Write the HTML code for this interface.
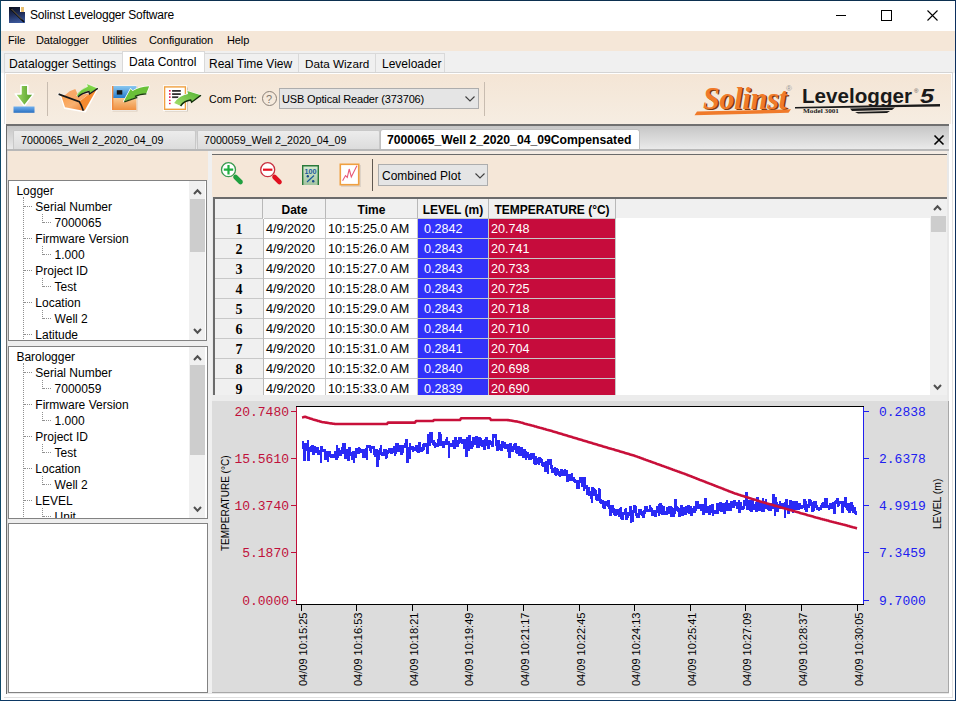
<!DOCTYPE html>
<html><head><meta charset="utf-8">
<style>
*{margin:0;padding:0;box-sizing:border-box}
html,body{width:956px;height:701px;overflow:hidden;background:#fff;font-family:"Liberation Sans",sans-serif}
.a{position:absolute}
.t{position:absolute;white-space:pre;line-height:14px;font-family:"Liberation Sans",sans-serif;font-size:12px;color:#000}
.mono{font-family:"Liberation Mono",monospace;font-size:13px;line-height:14px}
.rot{position:absolute;white-space:pre;font:11px/11px "Liberation Sans",sans-serif;color:#000;transform-origin:0 0;transform:rotate(-90deg) translate(-73px,0);width:73px;text-align:right}
.tick{position:absolute;width:1px;height:6px;background:#000}
.beige{background:#f5e7d8}
.tree .t{font-size:12px}
.dv{position:absolute;border-left:1px dotted #909090;width:0}
.dh{position:absolute;border-top:1px dotted #909090;height:0}
.sb{position:absolute;background:#f0f0f0}
.thumb{position:absolute;background:#cdcdcd}
.chev{position:absolute;width:7px;height:7px;border-left:1.6px solid #606060;border-top:1.6px solid #606060}
.cell{position:absolute;height:20px;border-right:1px solid #c8c8c8;border-bottom:1px solid #c8c8c8;font:12.6px/21px "Liberation Sans",sans-serif;padding-left:2px;white-space:pre;overflow:hidden}
.hdr{position:absolute;height:20px;background:#f0f0f0;border-right:1px solid #b8b8b8;border-bottom:1px solid #c8c8c8;font:bold 12px/23px "Liberation Sans",sans-serif;text-align:center;white-space:pre;overflow:hidden}
.rn{position:absolute;height:20px;width:49px;background:#f0f0f0;border-right:1px solid #b8b8b8;border-bottom:1px solid #c8c8c8;font:bold 14px/22px "Liberation Serif",serif;text-align:center}
</style></head><body>
<!-- window border -->
<div class="a" style="left:0;top:0;width:956px;height:701px;border:1px solid #0c3050;border-left-color:#0e4868;border-right-color:#0c2f5e;border-bottom-color:#0c3864"></div>

<!-- title bar -->
<div class="a" style="left:9px;top:7px;width:16px;height:16px;background:linear-gradient(170deg,#0a1020 0%,#1e2c58 45%,#4060a8 100%)"></div>
<div class="a" style="left:20px;top:7px;width:5px;height:5px;background:#fff"></div>
<div class="a" style="left:21px;top:7px;width:3px;height:5px;background:#e8c070"></div>
<svg class="a" style="left:9px;top:7px" width="16" height="16"><line x1="1.5" y1="1.5" x2="15" y2="15" stroke="#080808" stroke-width="1.6"/><line x1="2.5" y1="2" x2="13" y2="12.5" stroke="#a09070" stroke-width="0.7"/></svg>
<div class="t" style="left:30px;top:8px;font-size:12px;letter-spacing:-0.2px">Solinst Levelogger Software</div>
<div class="a" style="left:836px;top:15px;width:10px;height:1px;background:#000"></div>
<div class="a" style="left:881px;top:10px;width:11px;height:11px;border:1px solid #000"></div>
<svg class="a" style="left:926px;top:9px" width="13" height="13"><path d="M1.5,1.5 L11.5,11.5 M11.5,1.5 L1.5,11.5" stroke="#000" stroke-width="1.1"/></svg>

<!-- menu bar -->
<div class="a beige" style="left:1px;top:31px;width:954px;height:20px"></div>
<div class="t" style="left:8px;top:33px;font-size:11px;letter-spacing:-0.1px">File</div>
<div class="t" style="left:36px;top:33px;font-size:11px;letter-spacing:-0.1px">Datalogger</div>
<div class="t" style="left:102px;top:33px;font-size:11px;letter-spacing:-0.1px">Utilities</div>
<div class="t" style="left:149px;top:33px;font-size:11px;letter-spacing:-0.1px">Configuration</div>
<div class="t" style="left:227px;top:33px;font-size:11px;letter-spacing:-0.1px">Help</div>

<!-- top tabs -->
<div class="a" style="left:1px;top:51px;width:954px;height:22px;background:#f0f0f0"></div>
<div class="a" style="left:4px;top:53px;width:119px;height:20px;background:#f0f0f0;border:1px solid #d9d9d9;border-bottom:none"></div>
<div class="a" style="left:204px;top:53px;width:95px;height:20px;background:#f0f0f0;border:1px solid #d9d9d9;border-bottom:none"></div>
<div class="a" style="left:298px;top:53px;width:78px;height:20px;background:#f0f0f0;border:1px solid #d9d9d9;border-bottom:none"></div>
<div class="a" style="left:375px;top:53px;width:70px;height:20px;background:#f0f0f0;border:1px solid #d9d9d9;border-bottom:none"></div>
<div class="a" style="left:122px;top:51px;width:83px;height:23px;background:#fff;border:1px solid #d9d9d9;border-bottom:none"></div>
<div class="t" style="left:9px;top:57px;font-size:12.2px">Datalogger Settings</div>
<div class="t" style="left:129px;top:55px;font-size:12px">Data Control</div>
<div class="t" style="left:209px;top:57px;font-size:12px">Real Time View</div>
<div class="t" style="left:305px;top:57px;font-size:11.7px">Data Wizard</div>
<div class="t" style="left:382px;top:57px;font-size:12px">Leveloader</div>

<!-- main toolbar -->
<div class="a" style="left:4px;top:72px;width:949px;height:52px;border-top:1px solid #d4d4d4;border-left:1px solid #e0e0e0;border-right:1px solid #d8d8d8;background:linear-gradient(#f4e5d5,#f6ede2)"><div class="a" style="left:0;top:0;right:0;height:1px;background:#fff"></div><div class="a" style="left:0;top:0;bottom:0;width:1px;background:#fff"></div><div class="a" style="right:0;top:0;bottom:0;width:1px;background:#fff"></div></div>
<!-- icon: download -->
<svg class="a" style="left:10px;top:82px" width="28" height="34" viewBox="0 0 28 34">
  <defs><linearGradient id="gA" x1="0" x2="1"><stop offset="0" stop-color="#a8dc70"/><stop offset="1" stop-color="#4a9a20"/></linearGradient>
  <linearGradient id="gB" x1="0" x2="0" y1="0" y2="1"><stop offset="0" stop-color="#70b0f0"/><stop offset="1" stop-color="#2a70c0"/></linearGradient></defs>
  <path d="M11,3.2 H17.8 V11.9 H23.6 L14.4,24 L5.2,11.9 H11 Z" fill="url(#gA)" stroke="#fff" stroke-width="1.5" stroke-linejoin="round"/>
  <rect x="3.5" y="24.5" width="21" height="6.3" fill="url(#gB)"/>
</svg>
<div class="a" style="left:47px;top:82px;width:1px;height:34px;background:#c8bcb0"></div>
<!-- icon: open folder -->
<svg class="a" style="left:50px;top:78px" width="55" height="40" viewBox="0 0 55 40">
  <defs><linearGradient id="gF" x1="0" x2="1" y1="0" y2="1"><stop offset="0" stop-color="#ff9a40"/><stop offset=".6" stop-color="#f8b070"/><stop offset="1" stop-color="#f08030"/></linearGradient>
  <linearGradient id="gG" x1="0" x2="1" y1="1" y2="0"><stop offset="0" stop-color="#5ab830"/><stop offset="1" stop-color="#90e050"/></linearGradient></defs>
  
  <path d="M8.6,16.1 L29.3,23.6 L40.3,15 L47.2,10.4 L35,33.5 L15,30 L11.5,18.4 Z" fill="#fff" stroke="#fff" stroke-width="2.2" stroke-linejoin="round"/>
  <path d="M29.3,23.6 L40.3,15 L47.2,10.4 L34.5,32.8 Z" fill="#f58a30"/>
  <path d="M14,18 L19.6,13.2 L25.3,10.9 L28,17 L39.5,15.5 L29.3,23.6 Z" fill="#f8a868"/>
  <path d="M8.6,16.1 L29.3,23.6 Q31.5,27 33.4,32.8 L15,29.3 L11.5,18.4 Z" fill="url(#gF)"/>
  <path d="M8.6,16.1 L29.3,23.6 Q31.5,27 33.4,32.8" fill="none" stroke="#181818" stroke-width="1.7"/>
  <path d="M26.5,17.5 Q30,11 37.5,8.5 L36.5,5.5 L47.8,10.2 L39.5,16 L38.8,13 Q32,14.5 29,19 Z" fill="url(#gG)" stroke="#fff" stroke-width="0.6"/>
  <path d="M28,19 Q32,15 39,13.5 L39.5,16 L47.8,10.4" fill="none" stroke="#181818" stroke-width="1.3"/>
</svg>
<!-- icon: save/download -->
<svg class="a" style="left:110px;top:83px" width="42" height="30" viewBox="0 0 42 30">
  <defs><linearGradient id="gH" x1="0" x2="0" y1="0" y2="1"><stop offset="0" stop-color="#8ac8f0"/><stop offset=".48" stop-color="#2a80d0"/><stop offset=".5" stop-color="#f8c890"/><stop offset="1" stop-color="#f09040"/></linearGradient></defs>
  <rect x="2.5" y="3.5" width="25" height="25" fill="#c8b8a8" opacity="0.6"/>
  <rect x="1.5" y="2.5" width="25" height="25" fill="#fff"/>
  <rect x="2" y="3" width="24.4" height="24" fill="url(#gH)"/>
  <rect x="2" y="3" width="1.4" height="24" fill="#f08a40"/>
  <rect x="6.8" y="7.2" width="5.5" height="4.4" fill="#181818"/>
  <path d="M13.8,18.4 L20.6,5.9 L22.6,8 Q29,3.8 39.2,3.2 L36.3,10.6 Q29.5,10.8 25.2,13 L26.6,14.4 Z" fill="#6ac038" stroke="#fff" stroke-width="1.4" stroke-linejoin="round"/>
  <path d="M13.8,18.4 L20.6,5.9 L22.6,8 Q29,3.8 39.2,3.2 L36.3,10.6 Q29.5,10.8 25.2,13 L26.6,14.4 Z" fill="#6ac038"/>
  <path d="M14.3,18.8 L26.6,14.6 L25.6,13.2 Q29.5,11.2 36.3,10.9" fill="none" stroke="#1a3a10" stroke-width="1.3"/>
</svg>
<!-- icon: report export -->
<svg class="a" style="left:162px;top:83px" width="42" height="30" viewBox="0 0 42 30">
  <defs><linearGradient id="gR" x1="0" x2="1" y1="1" y2="0"><stop offset="0" stop-color="#a8e070"/><stop offset="1" stop-color="#50b030"/></linearGradient></defs>
  <rect x="3" y="4.5" width="23" height="24" fill="#b8b0a8" opacity="0.6"/>
  <rect x="1" y="2.3" width="24" height="25.5" fill="#fff"/>
  <rect x="2.6" y="3.9" width="20.8" height="22.4" fill="#fff" stroke="#f0a040" stroke-width="1.4"/>
  <g fill="#e8104a"><rect x="7" y="7" width="1.6" height="1.6"/><rect x="7" y="10.2" width="1.6" height="1.6"/><rect x="7" y="13.3" width="1.6" height="1.6"/><rect x="7" y="16.7" width="1.6" height="1.4"/><rect x="7" y="19.8" width="1.6" height="1.4"/></g>
  <g fill="#303030"><rect x="10.1" y="7" width="8.7" height="1.8"/><rect x="10.1" y="10.2" width="8.7" height="1.8"/><rect x="10.1" y="13.3" width="6.3" height="1.8"/></g>
  <path d="M12.2,20 Q17,12.5 26.1,10.9 L25.3,8 L38.9,12.2 L29.5,19 L28.7,16.8 Q22,17.5 19,23.1 Z" fill="url(#gR)" stroke="#fff" stroke-width="1.2" stroke-linejoin="round"/>
  <path d="M12.2,20 Q17,12.5 26.1,10.9 L25.3,8 L38.9,12.2 L29.5,19 L28.7,16.8 Q22,17.5 19,23.1 Z" fill="url(#gR)"/>
  <path d="M18.6,23 Q22,17.8 28.7,17 L29.6,19.2 L39,12.3" fill="none" stroke="#102a08" stroke-width="1.4"/>
</svg>
<div class="t" style="left:209px;top:92px;font-size:10.6px">Com Port:</div>
<div class="a" style="left:262px;top:91px;width:15px;height:15px;border:1px solid #8a8078;border-radius:50%"></div>
<div class="t" style="left:266px;top:92px;font-size:11px;color:#807870">?</div>
<div class="a" style="left:279px;top:88px;width:200px;height:21px;background:#e5e5e5;border:1px solid #adadad"></div>
<div class="t" style="left:282px;top:92px;font-size:11px;letter-spacing:-0.15px">USB Optical Reader (373706)</div>
<svg class="a" style="left:463px;top:94px" width="14" height="9"><path d="M2.5,2.5 L7,7 L11.5,2.5" fill="none" stroke="#404040" stroke-width="1.1"/></svg>
<div class="a" style="left:484px;top:82px;width:1px;height:34px;background:#c8bcb0"></div>

<!-- logo -->
<svg class="a" style="left:680px;top:76px" width="270" height="46" viewBox="0 0 270 46">
  <text x="24.5" y="33.5" font-family="Liberation Serif" font-style="italic" font-weight="bold" font-size="31" fill="#7a3a10" textLength="84" lengthAdjust="spacingAndGlyphs">Solinst</text>
  <text x="23" y="33" font-family="Liberation Serif" font-style="italic" font-weight="bold" font-size="31" fill="#f07a2a" textLength="84" lengthAdjust="spacingAndGlyphs">Solinst</text>
  <text x="106" y="15" font-family="Liberation Sans" font-size="8" fill="#999">®</text>
  <path d="M14.5,39.2 L17,35.6 L111,33.3 L108.5,36.8 Z" fill="#f07a2a"/>
  <text x="122" y="26.5" font-family="Liberation Sans" font-weight="bold" font-size="19.5" fill="#1a1a1a" textLength="110" lengthAdjust="spacingAndGlyphs">Levelogger</text>
  <text x="234" y="17" font-family="Liberation Sans" font-size="6" fill="#555">®</text>
  <text x="240" y="26.5" font-family="Liberation Sans" font-style="italic" font-weight="bold" font-size="20" fill="#1a1a1a" textLength="14" lengthAdjust="spacingAndGlyphs">5</text>
  <path d="M115,31 L260,28 L260,30.5 L115,32.5 Z" fill="#1a1a1a"/>
  <path d="M170,32.5 L215,31.5 L212,34 L172,35 Z" fill="#1a1a1a"/>
  <path d="M175,36 L210,35 L207,37 L178,37.6 Z" fill="#1a1a1a"/>
  <text x="123" y="36.5" font-family="Liberation Serif" font-weight="bold" font-size="6.5" fill="#222" textLength="36" lengthAdjust="spacingAndGlyphs">Model 3001</text>
</svg>

<!-- document panel -->
<div class="a" style="left:6px;top:124px;width:944px;height:571px;border-left:1px solid #6b6b6b;border-top:2px solid #707070;background:#e8e8e8"></div>
<div class="a" style="left:7px;top:126px;width:942px;height:23px;background:linear-gradient(#c6c6c6,#eaeaea)"></div>
<div class="a" style="left:13px;top:130px;width:183px;height:19px;background:linear-gradient(#ececec,#dcdcdc);border:1px solid #c8c8c8;border-bottom:none;border-radius:2px 2px 0 0"></div>
<div class="a" style="left:197px;top:130px;width:183px;height:19px;background:linear-gradient(#ececec,#dcdcdc);border:1px solid #c8c8c8;border-bottom:none;border-radius:2px 2px 0 0"></div>
<div class="a" style="left:380px;top:129px;width:260px;height:21px;background:#fff;border:1px solid #c0c0c0;border-bottom:none;border-radius:3px 3px 0 0"></div>
<div class="t" style="left:21px;top:133px;font-size:10.7px">7000065_Well 2_2020_04_09</div>
<div class="t" style="left:204px;top:133px;font-size:10.7px">7000059_Well 2_2020_04_09</div>
<div class="t" style="left:387px;top:133px;font-size:12.2px;font-weight:bold">7000065_Well 2_2020_04_09Compensated</div>
<svg class="a" style="left:933px;top:134px" width="12" height="12"><path d="M1.5,1.5 L10.5,10.5 M10.5,1.5 L1.5,10.5" stroke="#000" stroke-width="1.6"/></svg>
<div class="a" style="left:7px;top:149px;width:942px;height:2px;background:#b8b8b8"></div>

<!-- left panel -->
<div class="a" style="left:7px;top:151px;width:201px;height:542px;background:#eeeeee"></div><div class="a beige" style="left:7px;top:151px;width:201px;height:29px"></div>
<div class="a" style="left:7px;top:151px;width:1px;height:542px;background:#d8d8d8"></div>
<!-- tree 1 -->
<div class="a" style="left:8px;top:180px;width:199px;height:161px;background:#fff;border:1px solid #828282;overflow:hidden">
</div>
<!-- tree 2 -->
<div class="a" style="left:8px;top:346px;width:200px;height:173px;background:#fff;border:1px solid #828282"></div>
<!-- box 3 -->
<div class="a" style="left:8px;top:523px;width:200px;height:170px;background:#fff;border:1px solid #828282"></div>
<div class="a" style="left:9px;top:181px;width:180px;height:159px;overflow:hidden">
<div class="t" style="left:7.4px;top:2.5px;font-size:12px">Logger</div>
<div class="t" style="left:26.3px;top:18.5px;font-size:12px">Serial Number</div>
<div class="dh" style="left:15px;top:24.5px;width:8px"></div>
<div class="t" style="left:45.6px;top:34.5px;font-size:12px">7000065</div>
<div class="dv" style="left:33px;top:32.5px;height:9px"></div>
<div class="dh" style="left:34px;top:40.5px;width:8px"></div>
<div class="t" style="left:26.3px;top:50.5px;font-size:12px">Firmware Version</div>
<div class="dh" style="left:15px;top:56.5px;width:8px"></div>
<div class="t" style="left:45.6px;top:66.5px;font-size:12px">1.000</div>
<div class="dv" style="left:33px;top:64.5px;height:9px"></div>
<div class="dh" style="left:34px;top:72.5px;width:8px"></div>
<div class="t" style="left:26.3px;top:82.5px;font-size:12px">Project ID</div>
<div class="dh" style="left:15px;top:88.5px;width:8px"></div>
<div class="t" style="left:45.6px;top:98.5px;font-size:12px">Test</div>
<div class="dv" style="left:33px;top:96.5px;height:9px"></div>
<div class="dh" style="left:34px;top:104.5px;width:8px"></div>
<div class="t" style="left:26.3px;top:114.5px;font-size:12px">Location</div>
<div class="dh" style="left:15px;top:120.5px;width:8px"></div>
<div class="t" style="left:45.6px;top:130.5px;font-size:12px">Well 2</div>
<div class="dv" style="left:33px;top:128.5px;height:9px"></div>
<div class="dh" style="left:34px;top:136.5px;width:8px"></div>
<div class="t" style="left:26.3px;top:146.5px;font-size:12px">Latitude</div>
<div class="dh" style="left:15px;top:152.5px;width:8px"></div>
<div class="dv" style="left:14px;top:15.5px;height:160px"></div>
</div>
<div class="sb" style="left:189px;top:181px;width:16px;height:159px"></div>
<div class="thumb" style="left:190px;top:199px;width:15px;height:53px"></div>
<svg class="a" style="left:193.0px;top:187.5px" width="9" height="8"><path d="M1,6 L4.5,2.2 L8,6" fill="none" stroke="#505050" stroke-width="2"/></svg>
<svg class="a" style="left:193.0px;top:326.5px" width="9" height="8"><path d="M1,2 L4.5,5.8 L8,2" fill="none" stroke="#505050" stroke-width="2"/></svg>
<div class="a" style="left:9px;top:347px;width:180px;height:171px;overflow:hidden">
<div class="t" style="left:7.4px;top:3.0px;font-size:12px">Barologger</div>
<div class="t" style="left:26.3px;top:19.0px;font-size:12px">Serial Number</div>
<div class="dh" style="left:15px;top:25px;width:8px"></div>
<div class="t" style="left:45.6px;top:35.0px;font-size:12px">7000059</div>
<div class="dv" style="left:33px;top:33px;height:9px"></div>
<div class="dh" style="left:34px;top:41px;width:8px"></div>
<div class="t" style="left:26.3px;top:51.0px;font-size:12px">Firmware Version</div>
<div class="dh" style="left:15px;top:57px;width:8px"></div>
<div class="t" style="left:45.6px;top:67.0px;font-size:12px">1.000</div>
<div class="dv" style="left:33px;top:65px;height:9px"></div>
<div class="dh" style="left:34px;top:73px;width:8px"></div>
<div class="t" style="left:26.3px;top:83.0px;font-size:12px">Project ID</div>
<div class="dh" style="left:15px;top:89px;width:8px"></div>
<div class="t" style="left:45.6px;top:99.0px;font-size:12px">Test</div>
<div class="dv" style="left:33px;top:97px;height:9px"></div>
<div class="dh" style="left:34px;top:105px;width:8px"></div>
<div class="t" style="left:26.3px;top:115.0px;font-size:12px">Location</div>
<div class="dh" style="left:15px;top:121px;width:8px"></div>
<div class="t" style="left:45.6px;top:131.0px;font-size:12px">Well 2</div>
<div class="dv" style="left:33px;top:129px;height:9px"></div>
<div class="dh" style="left:34px;top:137px;width:8px"></div>
<div class="t" style="left:26.3px;top:147.0px;font-size:12px">LEVEL</div>
<div class="dh" style="left:15px;top:153px;width:8px"></div>
<div class="t" style="left:45.6px;top:163.0px;font-size:12px">Unit</div>
<div class="dv" style="left:33px;top:161px;height:9px"></div>
<div class="dh" style="left:34px;top:169px;width:8px"></div>
<div class="dv" style="left:14px;top:16px;height:160px"></div>
</div>
<div class="sb" style="left:189px;top:347px;width:16px;height:171px"></div>
<div class="thumb" style="left:190px;top:365px;width:15px;height:90px"></div>
<svg class="a" style="left:193.0px;top:353.5px" width="9" height="8"><path d="M1,6 L4.5,2.2 L8,6" fill="none" stroke="#505050" stroke-width="2"/></svg>
<svg class="a" style="left:193.0px;top:504.5px" width="9" height="8"><path d="M1,2 L4.5,5.8 L8,2" fill="none" stroke="#505050" stroke-width="2"/></svg>

<!-- separator between panels -->
<div class="a" style="left:208px;top:151px;width:4px;height:542px;background:#f0f0f0"></div>

<!-- right panel toolbar -->
<div class="a beige" style="left:212px;top:154px;width:736px;height:43px;border-top:1px solid #6b6b6b"></div>
<div class="a" style="left:212px;top:151px;width:736px;height:3px;background:#f4ece4"></div>
<svg class="a" style="left:218px;top:160px" width="30" height="28">
  <circle cx="10.5" cy="9.7" r="7" fill="#fff" stroke="#3a9a50" stroke-width="1.3"/>
  <path d="M10.5,5 V14.4 M5.8,9.7 H15.2" stroke="#20b040" stroke-width="2.2"/>
  <path d="M17.5,17 L22.5,22" stroke="#20a040" stroke-width="4.6" stroke-linecap="round"/>
</svg>
<svg class="a" style="left:257px;top:160px" width="30" height="28">
  <circle cx="10.7" cy="9.7" r="7" fill="#fff" stroke="#c83040" stroke-width="1.3"/>
  <path d="M6,9.7 H15.4" stroke="#e81020" stroke-width="2.2"/>
  <path d="M17.5,17 L22.5,22" stroke="#e01020" stroke-width="4.6" stroke-linecap="round"/>
</svg>
<svg class="a" style="left:300px;top:163px" width="24" height="25" viewBox="0 0 24 25">
  <defs><linearGradient id="g100" x1="0" x2="0" y1="0" y2="1"><stop offset="0" stop-color="#d8ecd4"/><stop offset="1" stop-color="#a4c4a0"/></linearGradient></defs>
  <rect x="2" y="2" width="17" height="20" fill="url(#g100)"/>
  <path d="M2.7,22 V2.7 H18.3 V22" fill="none" stroke="#2a7a3a" stroke-width="1.4"/>
  <text x="10.5" y="10.5" font-family="Liberation Sans" font-weight="bold" font-size="7.2" fill="#1a5a9a" text-anchor="middle" textLength="12" lengthAdjust="spacingAndGlyphs">100</text>
  <path d="M7,19 L14,12.5" stroke="#1a5a9a" stroke-width="1.1"/>
  <circle cx="7.8" cy="13.3" r="1.2" fill="#1a4a8a"/><circle cx="13.2" cy="18.3" r="1.2" fill="#1a4a8a"/>
</svg>
<svg class="a" style="left:338px;top:162px" width="24" height="26" viewBox="0 0 24 26">
  <rect x="3" y="3" width="20" height="22" fill="#c8c0b8" opacity="0.5"/>
  <rect x="2.3" y="2.3" width="18.4" height="20.4" fill="#fff" stroke="#f0a040" stroke-width="1.6"/>
  <path d="M4.6,18.7 L7.5,13.6 L9.3,15.4 L11.2,7 L13.3,15 L18.9,3.8" fill="none" stroke="#e85878" stroke-width="1.1"/>
</svg>
<div class="a" style="left:372px;top:159px;width:1px;height:32px;background:#605850"></div>
<div class="a" style="left:378px;top:164px;width:110px;height:22px;background:#e5e5e5;border:1px solid #adadad"></div>
<div class="t" style="left:382px;top:169px;font-size:12px">Combined Plot</div>
<svg class="a" style="left:473px;top:171px" width="14" height="9"><path d="M2.5,2.5 L7,7 L11.5,2.5" fill="none" stroke="#404040" stroke-width="1.1"/></svg>

<div class="a" style="left:213px;top:197px;width:735px;height:198px;background:#fff;border-left:2px solid #6b6b6b;border-top:2px solid #6b6b6b;overflow:hidden">
<div class="a" style="left:0;top:0;width:716px;height:19px;background:#f0f0f0"></div>
<div class="hdr" style="left:0px;top:0;width:48px"></div>
<div class="hdr" style="left:49px;top:0;width:62px">Date</div>
<div class="hdr" style="left:111px;top:0;width:92px">Time</div>
<div class="hdr" style="left:203px;top:0;width:71px">LEVEL (m)</div>
<div class="hdr" style="left:274px;top:0;width:127px">TEMPERATURE (°C)</div>
<div class="rn" style="left:0;top:20px">1</div>
<div class="cell" style="left:49px;top:20px;width:62px">4/9/2020</div>
<div class="cell" style="left:111px;top:20px;width:92px">10:15:25.0 AM</div>
<div class="cell" style="left:203px;top:20px;width:71px;background:#3232fa;color:#fff;padding-left:6px">0.2842</div>
<div class="cell" style="left:274px;top:20px;width:127px;background:#c60c3c;color:#fff">20.748</div>
<div class="rn" style="left:0;top:40px">2</div>
<div class="cell" style="left:49px;top:40px;width:62px">4/9/2020</div>
<div class="cell" style="left:111px;top:40px;width:92px">10:15:26.0 AM</div>
<div class="cell" style="left:203px;top:40px;width:71px;background:#3232fa;color:#fff;padding-left:6px">0.2843</div>
<div class="cell" style="left:274px;top:40px;width:127px;background:#c60c3c;color:#fff">20.741</div>
<div class="rn" style="left:0;top:60px">3</div>
<div class="cell" style="left:49px;top:60px;width:62px">4/9/2020</div>
<div class="cell" style="left:111px;top:60px;width:92px">10:15:27.0 AM</div>
<div class="cell" style="left:203px;top:60px;width:71px;background:#3232fa;color:#fff;padding-left:6px">0.2843</div>
<div class="cell" style="left:274px;top:60px;width:127px;background:#c60c3c;color:#fff">20.733</div>
<div class="rn" style="left:0;top:80px">4</div>
<div class="cell" style="left:49px;top:80px;width:62px">4/9/2020</div>
<div class="cell" style="left:111px;top:80px;width:92px">10:15:28.0 AM</div>
<div class="cell" style="left:203px;top:80px;width:71px;background:#3232fa;color:#fff;padding-left:6px">0.2843</div>
<div class="cell" style="left:274px;top:80px;width:127px;background:#c60c3c;color:#fff">20.725</div>
<div class="rn" style="left:0;top:100px">5</div>
<div class="cell" style="left:49px;top:100px;width:62px">4/9/2020</div>
<div class="cell" style="left:111px;top:100px;width:92px">10:15:29.0 AM</div>
<div class="cell" style="left:203px;top:100px;width:71px;background:#3232fa;color:#fff;padding-left:6px">0.2843</div>
<div class="cell" style="left:274px;top:100px;width:127px;background:#c60c3c;color:#fff">20.718</div>
<div class="rn" style="left:0;top:120px">6</div>
<div class="cell" style="left:49px;top:120px;width:62px">4/9/2020</div>
<div class="cell" style="left:111px;top:120px;width:92px">10:15:30.0 AM</div>
<div class="cell" style="left:203px;top:120px;width:71px;background:#3232fa;color:#fff;padding-left:6px">0.2844</div>
<div class="cell" style="left:274px;top:120px;width:127px;background:#c60c3c;color:#fff">20.710</div>
<div class="rn" style="left:0;top:140px">7</div>
<div class="cell" style="left:49px;top:140px;width:62px">4/9/2020</div>
<div class="cell" style="left:111px;top:140px;width:92px">10:15:31.0 AM</div>
<div class="cell" style="left:203px;top:140px;width:71px;background:#3232fa;color:#fff;padding-left:6px">0.2841</div>
<div class="cell" style="left:274px;top:140px;width:127px;background:#c60c3c;color:#fff">20.704</div>
<div class="rn" style="left:0;top:160px">8</div>
<div class="cell" style="left:49px;top:160px;width:62px">4/9/2020</div>
<div class="cell" style="left:111px;top:160px;width:92px">10:15:32.0 AM</div>
<div class="cell" style="left:203px;top:160px;width:71px;background:#3232fa;color:#fff;padding-left:6px">0.2840</div>
<div class="cell" style="left:274px;top:160px;width:127px;background:#c60c3c;color:#fff">20.698</div>
<div class="rn" style="left:0;top:180px">9</div>
<div class="cell" style="left:49px;top:180px;width:62px">4/9/2020</div>
<div class="cell" style="left:111px;top:180px;width:92px">10:15:33.0 AM</div>
<div class="cell" style="left:203px;top:180px;width:71px;background:#3232fa;color:#fff;padding-left:6px">0.2839</div>
<div class="cell" style="left:274px;top:180px;width:127px;background:#c60c3c;color:#fff">20.690</div>
</div>
<div class="sb" style="left:930px;top:199px;width:17px;height:196px"></div>
<div class="thumb" style="left:931px;top:216px;width:15px;height:16px"></div>
<svg class="a" style="left:933.0px;top:203.5px" width="9" height="8"><path d="M1,6 L4.5,2.2 L8,6" fill="none" stroke="#505050" stroke-width="2"/></svg>
<svg class="a" style="left:933.0px;top:382.5px" width="9" height="8"><path d="M1,2 L4.5,5.8 L8,2" fill="none" stroke="#505050" stroke-width="2"/></svg>

<!-- chart area -->
<div class="a" style="left:212px;top:395px;width:736px;height:6px;background:#ececec"></div>
<div class="a" style="left:212px;top:401px;width:736px;height:292px;background:#dcdcdc"></div>

<svg style="position:absolute;left:0;top:0" width="956" height="701" viewBox="0 0 956 701">
  <rect x="297" y="406" width="567" height="199" fill="#fff"/>
  <path d="M301.5,441h2V449h-2ZM302.5,443h2V461h-2ZM303.5,443h2V461h-2ZM304.5,443h2V451h-2ZM305.5,445h2V451h-2ZM306.5,440h2V461h-2ZM307.5,447h2V461h-2ZM308.5,447h2V452h-2ZM309.5,446h2V452h-2ZM310.5,445h2V449h-2ZM311.5,445h2V455h-2ZM312.5,446h2V455h-2ZM313.5,446h2V453h-2ZM314.5,450h2V453h-2ZM315.5,447h2V453h-2ZM316.5,447h2V455h-2ZM317.5,451h2V455h-2ZM318.5,450h2V454h-2ZM319.5,446h2V463h-2ZM320.5,446h2V452h-2ZM321.5,449h2V452h-2ZM322.5,449h2V452h-2ZM323.5,449h2V460h-2ZM324.5,453h2V460h-2ZM325.5,451h2V457h-2ZM326.5,451h2V462h-2ZM327.5,454h2V457h-2ZM328.5,451h2V457h-2ZM329.5,454h2V458h-2ZM330.5,454h2V458h-2ZM331.5,454h2V458h-2ZM332.5,454h2V458h-2ZM333.5,451h2V457h-2ZM334.5,451h2V460h-2ZM335.5,445h2V460h-2ZM336.5,448h2V458h-2ZM337.5,448h2V456h-2ZM338.5,452h2V456h-2ZM339.5,450h2V456h-2ZM340.5,447h2V454h-2ZM341.5,443h2V454h-2ZM342.5,443h2V446h-2ZM343.5,443h2V459h-2ZM344.5,453h2V459h-2ZM345.5,449h2V456h-2ZM346.5,449h2V461h-2ZM347.5,447h2V461h-2ZM348.5,447h2V456h-2ZM349.5,452h2V456h-2ZM350.5,452h2V460h-2ZM351.5,451h2V457h-2ZM352.5,451h2V463h-2ZM353.5,455h2V458h-2ZM354.5,448h2V458h-2ZM355.5,448h2V454h-2ZM356.5,450h2V454h-2ZM357.5,447h2V454h-2ZM358.5,448h2V453h-2ZM359.5,449h2V453h-2ZM360.5,449h2V453h-2ZM361.5,449h2V458h-2ZM362.5,449h2V458h-2ZM363.5,451h2V454h-2ZM364.5,448h2V458h-2ZM365.5,445h2V460h-2ZM366.5,445h2V448h-2ZM367.5,445h2V448h-2ZM368.5,445h2V451h-2ZM369.5,446h2V453h-2ZM370.5,446h2V449h-2ZM371.5,446h2V449h-2ZM372.5,446h2V455h-2ZM373.5,452h2V457h-2ZM374.5,449h2V457h-2ZM375.5,449h2V467h-2ZM376.5,456h2V467h-2ZM377.5,450h2V460h-2ZM378.5,448h2V454h-2ZM379.5,445h2V455h-2ZM380.5,452h2V456h-2ZM381.5,453h2V456h-2ZM382.5,449h2V456h-2ZM383.5,449h2V455h-2ZM384.5,449h2V459h-2ZM385.5,451h2V458h-2ZM386.5,450h2V454h-2ZM387.5,448h2V453h-2ZM388.5,448h2V452h-2ZM389.5,448h2V454h-2ZM390.5,450h2V454h-2ZM391.5,448h2V453h-2ZM392.5,446h2V451h-2ZM393.5,446h2V456h-2ZM394.5,443h2V454h-2ZM395.5,443h2V446h-2ZM396.5,443h2V452h-2ZM397.5,448h2V452h-2ZM398.5,445h2V452h-2ZM399.5,445h2V455h-2ZM400.5,450h2V455h-2ZM401.5,445h2V453h-2ZM402.5,445h2V448h-2ZM403.5,443h2V448h-2ZM404.5,439h2V448h-2ZM405.5,439h2V463h-2ZM406.5,447h2V463h-2ZM407.5,447h2V459h-2ZM408.5,443h2V459h-2ZM409.5,447h2V450h-2ZM410.5,446h2V450h-2ZM411.5,446h2V452h-2ZM412.5,448h2V451h-2ZM413.5,447h2V451h-2ZM414.5,445h2V451h-2ZM415.5,445h2V452h-2ZM416.5,448h2V453h-2ZM417.5,442h2V453h-2ZM418.5,442h2V452h-2ZM419.5,449h2V452h-2ZM420.5,447h2V452h-2ZM421.5,444h2V451h-2ZM422.5,443h2V450h-2ZM423.5,443h2V447h-2ZM424.5,443h2V446h-2ZM425.5,443h2V454h-2ZM426.5,434h2V454h-2ZM427.5,434h2V446h-2ZM428.5,432h2V446h-2ZM429.5,432h2V435h-2ZM430.5,432h2V443h-2ZM431.5,440h2V445h-2ZM432.5,440h2V446h-2ZM433.5,442h2V448h-2ZM434.5,443h2V446h-2ZM435.5,443h2V447h-2ZM436.5,439h2V447h-2ZM437.5,432h2V442h-2ZM438.5,432h2V446h-2ZM439.5,434h2V446h-2ZM440.5,441h2V445h-2ZM441.5,441h2V448h-2ZM442.5,441h2V448h-2ZM443.5,441h2V444h-2ZM444.5,439h2V445h-2ZM445.5,437h2V445h-2ZM446.5,441h2V445h-2ZM447.5,441h2V458h-2ZM448.5,444h2V447h-2ZM449.5,443h2V447h-2ZM450.5,443h2V446h-2ZM451.5,440h2V447h-2ZM452.5,444h2V449h-2ZM453.5,437h2V449h-2ZM454.5,437h2V447h-2ZM455.5,443h2V447h-2ZM456.5,440h2V447h-2ZM457.5,437h2V444h-2ZM458.5,437h2V440h-2ZM459.5,437h2V443h-2ZM460.5,440h2V444h-2ZM461.5,439h2V444h-2ZM462.5,440h2V449h-2ZM463.5,439h2V449h-2ZM464.5,439h2V457h-2ZM465.5,437h2V457h-2ZM466.5,437h2V451h-2ZM467.5,435h2V451h-2ZM468.5,435h2V449h-2ZM469.5,441h2V449h-2ZM470.5,443h2V449h-2ZM471.5,437h2V447h-2ZM472.5,437h2V445h-2ZM473.5,438h2V445h-2ZM474.5,436h2V444h-2ZM475.5,436h2V448h-2ZM476.5,444h2V448h-2ZM477.5,437h2V448h-2ZM478.5,437h2V446h-2ZM479.5,438h2V446h-2ZM480.5,442h2V447h-2ZM481.5,440h2V447h-2ZM482.5,440h2V450h-2ZM483.5,439h2V450h-2ZM484.5,437h2V443h-2ZM485.5,437h2V446h-2ZM486.5,442h2V449h-2ZM487.5,440h2V449h-2ZM488.5,440h2V445h-2ZM489.5,441h2V445h-2ZM490.5,441h2V447h-2ZM491.5,434h2V447h-2ZM492.5,434h2V438h-2ZM493.5,434h2V438h-2ZM494.5,434h2V446h-2ZM495.5,443h2V451h-2ZM496.5,440h2V451h-2ZM497.5,440h2V450h-2ZM498.5,444h2V449h-2ZM499.5,445h2V451h-2ZM500.5,441h2V451h-2ZM501.5,441h2V448h-2ZM502.5,442h2V448h-2ZM503.5,442h2V449h-2ZM504.5,444h2V449h-2ZM505.5,444h2V447h-2ZM506.5,444h2V452h-2ZM507.5,445h2V458h-2ZM508.5,443h2V458h-2ZM509.5,443h2V452h-2ZM510.5,446h2V452h-2ZM511.5,446h2V452h-2ZM512.5,444h2V450h-2ZM513.5,443h2V448h-2ZM514.5,443h2V453h-2ZM515.5,446h2V454h-2ZM516.5,446h2V449h-2ZM517.5,446h2V456h-2ZM518.5,451h2V456h-2ZM519.5,447h2V456h-2ZM520.5,447h2V453h-2ZM521.5,450h2V458h-2ZM522.5,449h2V458h-2ZM523.5,449h2V454h-2ZM524.5,451h2V460h-2ZM525.5,452h2V457h-2ZM526.5,452h2V458h-2ZM527.5,454h2V460h-2ZM528.5,457h2V460h-2ZM529.5,453h2V460h-2ZM530.5,453h2V459h-2ZM531.5,453h2V457h-2ZM532.5,453h2V464h-2ZM533.5,461h2V465h-2ZM534.5,456h2V465h-2ZM535.5,458h2V463h-2ZM536.5,458h2V464h-2ZM537.5,457h2V465h-2ZM538.5,457h2V461h-2ZM539.5,458h2V463h-2ZM540.5,459h2V466h-2ZM541.5,463h2V467h-2ZM542.5,462h2V467h-2ZM543.5,462h2V472h-2ZM544.5,461h2V467h-2ZM545.5,462h2V472h-2ZM546.5,459h2V474h-2ZM547.5,459h2V464h-2ZM548.5,459h2V465h-2ZM549.5,459h2V469h-2ZM550.5,465h2V473h-2ZM551.5,469h2V473h-2ZM552.5,468h2V473h-2ZM553.5,467h2V475h-2ZM554.5,468h2V476h-2ZM555.5,468h2V472h-2ZM556.5,469h2V475h-2ZM557.5,471h2V476h-2ZM558.5,473h2V477h-2ZM559.5,469h2V476h-2ZM560.5,469h2V473h-2ZM561.5,470h2V476h-2ZM562.5,472h2V476h-2ZM563.5,469h2V476h-2ZM564.5,470h2V473h-2ZM565.5,470h2V482h-2ZM566.5,474h2V482h-2ZM567.5,474h2V481h-2ZM568.5,474h2V481h-2ZM569.5,475h2V481h-2ZM570.5,473h2V481h-2ZM571.5,477h2V481h-2ZM572.5,477h2V482h-2ZM573.5,479h2V483h-2ZM574.5,480h2V483h-2ZM575.5,480h2V489h-2ZM576.5,485h2V489h-2ZM577.5,480h2V489h-2ZM578.5,477h2V483h-2ZM579.5,477h2V481h-2ZM580.5,477h2V487h-2ZM581.5,480h2V484h-2ZM582.5,477h2V491h-2ZM583.5,477h2V489h-2ZM584.5,485h2V489h-2ZM585.5,485h2V495h-2ZM586.5,492h2V495h-2ZM587.5,487h2V496h-2ZM588.5,491h2V496h-2ZM589.5,491h2V499h-2ZM590.5,487h2V503h-2ZM591.5,487h2V491h-2ZM592.5,488h2V496h-2ZM593.5,489h2V493h-2ZM594.5,490h2V500h-2ZM595.5,497h2V501h-2ZM596.5,494h2V501h-2ZM597.5,488h2V497h-2ZM598.5,489h2V503h-2ZM599.5,499h2V504h-2ZM600.5,500h2V504h-2ZM601.5,500h2V508h-2ZM602.5,504h2V509h-2ZM603.5,501h2V509h-2ZM604.5,501h2V505h-2ZM605.5,501h2V506h-2ZM606.5,500h2V507h-2ZM607.5,500h2V509h-2ZM608.5,505h2V516h-2ZM609.5,505h2V516h-2ZM610.5,505h2V509h-2ZM611.5,505h2V513h-2ZM612.5,508h2V515h-2ZM613.5,512h2V516h-2ZM614.5,509h2V516h-2ZM615.5,509h2V515h-2ZM616.5,509h2V515h-2ZM617.5,509h2V517h-2ZM618.5,508h2V517h-2ZM619.5,507h2V519h-2ZM620.5,516h2V520h-2ZM621.5,512h2V520h-2ZM622.5,512h2V515h-2ZM623.5,509h2V515h-2ZM624.5,508h2V520h-2ZM625.5,513h2V520h-2ZM626.5,512h2V518h-2ZM627.5,512h2V516h-2ZM628.5,506h2V516h-2ZM629.5,506h2V523h-2ZM630.5,519h2V522h-2ZM631.5,510h2V522h-2ZM632.5,505h2V513h-2ZM633.5,505h2V510h-2ZM634.5,506h2V516h-2ZM635.5,513h2V518h-2ZM636.5,515h2V518h-2ZM637.5,509h2V518h-2ZM638.5,509h2V513h-2ZM639.5,509h2V515h-2ZM640.5,511h2V516h-2ZM641.5,511h2V518h-2ZM642.5,510h2V518h-2ZM643.5,506h2V514h-2ZM644.5,506h2V510h-2ZM645.5,506h2V512h-2ZM646.5,509h2V512h-2ZM647.5,509h2V512h-2ZM648.5,505h2V512h-2ZM649.5,507h2V512h-2ZM650.5,508h2V516h-2ZM651.5,510h2V516h-2ZM652.5,510h2V514h-2ZM653.5,510h2V517h-2ZM654.5,510h2V517h-2ZM655.5,506h2V513h-2ZM656.5,506h2V509h-2ZM657.5,504h2V516h-2ZM658.5,503h2V508h-2ZM659.5,503h2V514h-2ZM660.5,505h2V515h-2ZM661.5,511h2V515h-2ZM662.5,506h2V515h-2ZM663.5,511h2V515h-2ZM664.5,511h2V515h-2ZM665.5,507h2V515h-2ZM666.5,507h2V513h-2ZM667.5,506h2V514h-2ZM668.5,506h2V510h-2ZM669.5,506h2V517h-2ZM670.5,507h2V517h-2ZM671.5,509h2V517h-2ZM672.5,508h2V517h-2ZM673.5,499h2V514h-2ZM674.5,499h2V510h-2ZM675.5,506h2V511h-2ZM676.5,507h2V512h-2ZM677.5,508h2V517h-2ZM678.5,511h2V517h-2ZM679.5,505h2V515h-2ZM680.5,505h2V516h-2ZM681.5,507h2V516h-2ZM682.5,507h2V511h-2ZM683.5,507h2V515h-2ZM684.5,506h2V515h-2ZM685.5,506h2V513h-2ZM686.5,505h2V513h-2ZM687.5,505h2V514h-2ZM688.5,507h2V514h-2ZM689.5,506h2V516h-2ZM690.5,508h2V516h-2ZM691.5,508h2V513h-2ZM692.5,506h2V513h-2ZM693.5,506h2V513h-2ZM694.5,501h2V511h-2ZM695.5,501h2V504h-2ZM696.5,501h2V509h-2ZM697.5,506h2V509h-2ZM698.5,504h2V509h-2ZM699.5,504h2V511h-2ZM700.5,504h2V511h-2ZM701.5,504h2V515h-2ZM702.5,508h2V515h-2ZM703.5,498h2V512h-2ZM704.5,498h2V513h-2ZM705.5,508h2V513h-2ZM706.5,506h2V511h-2ZM707.5,506h2V515h-2ZM708.5,505h2V515h-2ZM709.5,510h2V513h-2ZM710.5,504h2V513h-2ZM711.5,504h2V516h-2ZM712.5,510h2V514h-2ZM713.5,510h2V514h-2ZM714.5,510h2V514h-2ZM715.5,503h2V514h-2ZM716.5,503h2V514h-2ZM717.5,503h2V511h-2ZM718.5,502h2V506h-2ZM719.5,502h2V512h-2ZM720.5,505h2V512h-2ZM721.5,503h2V508h-2ZM722.5,503h2V514h-2ZM723.5,505h2V514h-2ZM724.5,502h2V509h-2ZM725.5,500h2V511h-2ZM726.5,508h2V511h-2ZM727.5,503h2V511h-2ZM728.5,503h2V511h-2ZM729.5,501h2V511h-2ZM730.5,501h2V508h-2ZM731.5,504h2V508h-2ZM732.5,500h2V508h-2ZM733.5,500h2V506h-2ZM734.5,502h2V506h-2ZM735.5,502h2V509h-2ZM736.5,503h2V509h-2ZM737.5,500h2V513h-2ZM738.5,502h2V513h-2ZM739.5,502h2V510h-2ZM740.5,507h2V510h-2ZM741.5,506h2V510h-2ZM742.5,500h2V509h-2ZM743.5,500h2V506h-2ZM744.5,492h2V506h-2ZM745.5,492h2V510h-2ZM746.5,507h2V510h-2ZM747.5,500h2V510h-2ZM748.5,500h2V511h-2ZM749.5,508h2V512h-2ZM750.5,499h2V512h-2ZM751.5,499h2V507h-2ZM752.5,504h2V510h-2ZM753.5,504h2V510h-2ZM754.5,502h2V512h-2ZM755.5,497h2V512h-2ZM756.5,497h2V507h-2ZM757.5,501h2V511h-2ZM758.5,502h2V511h-2ZM759.5,502h2V508h-2ZM760.5,504h2V512h-2ZM761.5,498h2V512h-2ZM762.5,501h2V512h-2ZM763.5,501h2V509h-2ZM764.5,499h2V509h-2ZM765.5,503h2V506h-2ZM766.5,503h2V510h-2ZM767.5,505h2V511h-2ZM768.5,503h2V511h-2ZM769.5,503h2V511h-2ZM770.5,503h2V506h-2ZM771.5,494h2V509h-2ZM772.5,494h2V505h-2ZM773.5,497h2V516h-2ZM774.5,497h2V505h-2ZM775.5,502h2V512h-2ZM776.5,504h2V512h-2ZM777.5,504h2V508h-2ZM778.5,501h2V509h-2ZM779.5,506h2V509h-2ZM780.5,503h2V509h-2ZM781.5,503h2V509h-2ZM782.5,503h2V509h-2ZM783.5,502h2V518h-2ZM784.5,499h2V506h-2ZM785.5,499h2V510h-2ZM786.5,506h2V514h-2ZM787.5,505h2V514h-2ZM788.5,500h2V509h-2ZM789.5,500h2V509h-2ZM790.5,505h2V511h-2ZM791.5,501h2V513h-2ZM792.5,501h2V505h-2ZM793.5,501h2V510h-2ZM794.5,501h2V510h-2ZM795.5,501h2V509h-2ZM796.5,506h2V510h-2ZM797.5,503h2V510h-2ZM798.5,503h2V509h-2ZM799.5,505h2V509h-2ZM800.5,505h2V509h-2ZM801.5,505h2V508h-2ZM802.5,499h2V508h-2ZM803.5,499h2V510h-2ZM804.5,501h2V512h-2ZM805.5,504h2V512h-2ZM806.5,504h2V508h-2ZM807.5,499h2V508h-2ZM808.5,499h2V505h-2ZM809.5,500h2V506h-2ZM810.5,502h2V512h-2ZM811.5,507h2V512h-2ZM812.5,501h2V511h-2ZM813.5,501h2V504h-2ZM814.5,501h2V508h-2ZM815.5,505h2V510h-2ZM816.5,507h2V510h-2ZM817.5,507h2V511h-2ZM818.5,507h2V510h-2ZM819.5,505h2V510h-2ZM820.5,503h2V508h-2ZM821.5,502h2V506h-2ZM822.5,502h2V508h-2ZM823.5,498h2V508h-2ZM824.5,498h2V501h-2ZM825.5,498h2V508h-2ZM826.5,505h2V508h-2ZM827.5,505h2V510h-2ZM828.5,503h2V509h-2ZM829.5,503h2V506h-2ZM830.5,503h2V509h-2ZM831.5,502h2V509h-2ZM832.5,502h2V514h-2ZM833.5,501h2V514h-2ZM834.5,500h2V504h-2ZM835.5,498h2V503h-2ZM836.5,498h2V507h-2ZM837.5,501h2V506h-2ZM838.5,501h2V504h-2ZM839.5,501h2V504h-2ZM840.5,501h2V513h-2ZM841.5,501h2V513h-2ZM842.5,501h2V507h-2ZM843.5,497h2V507h-2ZM844.5,497h2V508h-2ZM845.5,504h2V510h-2ZM846.5,503h2V511h-2ZM847.5,503h2V513h-2ZM848.5,504h2V513h-2ZM849.5,502h2V508h-2ZM850.5,502h2V511h-2ZM851.5,505h2V513h-2ZM852.5,510h2V513h-2ZM853.5,507h2V514h-2ZM854.5,511h2V515h-2Z" fill="#2a2af5" shape-rendering="crispEdges"/>
  <path d="M302,417.5 L303,417.3 L304,417.0 L305,416.8 L306,417.1 L307,417.4 L308,417.8 L309,418.1 L310,418.4 L311,418.7 L312,419.0 L313,419.4 L314,419.7 L315,420.0 L316,420.3 L317,420.6 L318,420.9 L319,421.1 L320,421.4 L321,421.7 L322,422.0 L323,422.2 L324,422.3 L325,422.5 L326,422.6 L327,422.8 L328,422.9 L329,423.1 L330,423.2 L331,423.4 L332,423.5 L333,423.7 L334,423.8 L335,424.0 L336,424.0 L337,424.0 L338,424.0 L339,424.0 L340,424.0 L341,424.0 L342,424.0 L343,424.0 L344,424.0 L345,424.0 L346,424.0 L347,424.0 L348,424.0 L349,424.0 L350,424.0 L351,424.0 L352,424.0 L353,424.0 L354,424.0 L355,424.0 L356,424.0 L357,424.0 L358,424.0 L359,424.0 L360,424.0 L361,424.0 L362,424.0 L363,424.0 L364,424.0 L365,424.0 L366,424.0 L367,424.0 L368,424.0 L369,424.0 L370,424.0 L371,424.0 L372,424.0 L373,424.0 L374,424.0 L375,424.0 L376,424.0 L377,424.0 L378,424.0 L379,424.0 L380,424.0 L381,424.0 L382,424.0 L383,424.0 L384,424.0 L385,424.0 L386,424.0 L387,424.0 L388,422.6 L389,422.6 L390,422.6 L391,422.6 L392,422.6 L393,422.6 L394,422.6 L395,422.6 L396,422.6 L397,422.6 L398,422.6 L399,422.6 L400,422.6 L401,422.6 L402,422.6 L403,422.6 L404,422.6 L405,422.6 L406,422.6 L407,422.6 L408,422.6 L409,422.6 L410,422.6 L411,422.6 L412,422.6 L413,422.6 L414,422.6 L415,422.6 L416,421.0 L417,421.0 L418,421.0 L419,421.0 L420,421.0 L421,421.0 L422,421.0 L423,421.0 L424,421.0 L425,421.0 L426,421.0 L427,421.0 L428,421.0 L429,421.0 L430,421.0 L431,421.0 L432,421.0 L433,421.0 L434,420.0 L435,420.0 L436,420.0 L437,420.0 L438,420.0 L439,420.0 L440,420.0 L441,420.0 L442,420.0 L443,420.0 L444,420.0 L445,420.0 L446,420.0 L447,420.0 L448,420.0 L449,420.0 L450,420.0 L451,420.0 L452,420.0 L453,420.0 L454,420.0 L455,420.0 L456,420.0 L457,420.0 L458,420.0 L459,420.0 L460,420.0 L461,418.3 L462,418.3 L463,418.3 L464,418.3 L465,418.3 L466,418.3 L467,418.3 L468,418.3 L469,418.3 L470,418.3 L471,418.3 L472,418.3 L473,418.3 L474,418.3 L475,418.3 L476,418.3 L477,418.3 L478,418.3 L479,418.3 L480,418.3 L481,418.3 L482,418.3 L483,418.3 L484,418.3 L485,418.3 L486,418.3 L487,418.3 L488,418.3 L489,418.3 L490,418.3 L491,420.0 L492,420.0 L493,420.0 L494,420.0 L495,420.0 L496,420.0 L497,420.0 L498,420.0 L499,420.0 L500,420.0 L501,420.0 L502,420.0 L503,420.0 L504,420.0 L505,420.0 L506,420.0 L507,420.0 L508,420.1 L509,420.3 L510,420.4 L511,420.6 L512,420.8 L513,420.9 L514,421.1 L515,421.2 L516,421.4 L517,421.5 L518,421.8 L519,422.0 L520,422.3 L521,422.6 L522,422.8 L523,423.1 L524,423.4 L525,423.7 L526,423.9 L527,424.2 L528,424.5 L529,424.7 L530,425.0 L531,425.3 L532,425.6 L533,425.8 L534,426.1 L535,426.4 L536,426.6 L537,426.9 L538,427.2 L539,427.5 L540,427.8 L541,428.0 L542,428.3 L543,428.6 L544,428.9 L545,429.1 L546,429.4 L547,429.7 L548,429.9 L549,430.2 L550,430.5 L551,430.8 L552,431.1 L553,431.4 L554,431.7 L555,432.0 L556,432.3 L557,432.6 L558,432.9 L559,433.2 L560,433.5 L561,433.8 L562,434.1 L563,434.4 L564,434.7 L565,435.0 L566,435.3 L567,435.6 L568,435.9 L569,436.2 L570,436.5 L571,436.8 L572,437.1 L573,437.4 L574,437.7 L575,438.0 L576,438.3 L577,438.6 L578,438.9 L579,439.2 L580,439.5 L581,439.8 L582,440.1 L583,440.4 L584,440.7 L585,441.0 L586,441.3 L587,441.6 L588,441.9 L589,442.2 L590,442.5 L591,442.8 L592,443.1 L593,443.4 L594,443.7 L595,444.0 L596,444.3 L597,444.6 L598,444.9 L599,445.2 L600,445.5 L601,445.8 L602,446.1 L603,446.4 L604,446.7 L605,447.0 L606,447.3 L607,447.6 L608,447.9 L609,448.2 L610,448.5 L611,448.8 L612,449.1 L613,449.3 L614,449.6 L615,449.9 L616,450.2 L617,450.5 L618,450.8 L619,451.1 L620,451.4 L621,451.7 L622,452.0 L623,452.3 L624,452.6 L625,452.9 L626,453.2 L627,453.5 L628,453.8 L629,454.1 L630,454.4 L631,454.7 L632,455.0 L633,455.3 L634,455.6 L635,455.9 L636,456.3 L637,456.6 L638,457.0 L639,457.3 L640,457.7 L641,458.1 L642,458.4 L643,458.8 L644,459.2 L645,459.5 L646,459.9 L647,460.2 L648,460.6 L649,461.0 L650,461.3 L651,461.7 L652,462.1 L653,462.4 L654,462.8 L655,463.1 L656,463.5 L657,463.9 L658,464.2 L659,464.6 L660,464.9 L661,465.3 L662,465.7 L663,466.0 L664,466.4 L665,466.8 L666,467.1 L667,467.5 L668,467.8 L669,468.2 L670,468.6 L671,468.9 L672,469.3 L673,469.7 L674,470.0 L675,470.4 L676,470.7 L677,471.1 L678,471.5 L679,471.8 L680,472.2 L681,472.6 L682,472.9 L683,473.3 L684,473.6 L685,474.0 L686,474.4 L687,474.8 L688,475.2 L689,475.6 L690,475.9 L691,476.3 L692,476.7 L693,477.1 L694,477.5 L695,477.9 L696,478.3 L697,478.7 L698,479.1 L699,479.5 L700,479.9 L701,480.2 L702,480.6 L703,481.0 L704,481.4 L705,481.8 L706,482.2 L707,482.6 L708,483.0 L709,483.4 L710,483.8 L711,484.1 L712,484.5 L713,484.9 L714,485.3 L715,485.7 L716,486.1 L717,486.5 L718,486.9 L719,487.3 L720,487.6 L721,488.0 L722,488.4 L723,488.8 L724,489.2 L725,489.6 L726,490.0 L727,490.4 L728,490.8 L729,491.2 L730,491.6 L731,491.9 L732,492.3 L733,492.7 L734,493.1 L735,493.5 L736,493.8 L737,494.1 L738,494.4 L739,494.8 L740,495.1 L741,495.4 L742,495.7 L743,496.0 L744,496.3 L745,496.7 L746,497.0 L747,497.3 L748,497.6 L749,497.9 L750,498.2 L751,498.6 L752,498.9 L753,499.2 L754,499.5 L755,499.8 L756,500.1 L757,500.5 L758,500.8 L759,501.1 L760,501.4 L761,501.7 L762,502.0 L763,502.3 L764,502.5 L765,502.8 L766,503.1 L767,503.4 L768,503.7 L769,504.0 L770,504.3 L771,504.6 L772,504.8 L773,505.1 L774,505.4 L775,505.7 L776,506.0 L777,506.3 L778,506.6 L779,506.8 L780,507.1 L781,507.4 L782,507.7 L783,508.0 L784,508.3 L785,508.6 L786,508.9 L787,509.1 L788,509.4 L789,509.7 L790,510.0 L791,510.3 L792,510.6 L793,510.9 L794,511.1 L795,511.4 L796,511.7 L797,512.0 L798,512.3 L799,512.6 L800,512.9 L801,513.2 L802,513.4 L803,513.7 L804,514.0 L805,514.3 L806,514.6 L807,514.9 L808,515.2 L809,515.4 L810,515.7 L811,516.0 L812,516.3 L813,516.6 L814,516.9 L815,517.2 L816,517.5 L817,517.7 L818,518.0 L819,518.3 L820,518.6 L821,518.9 L822,519.1 L823,519.4 L824,519.6 L825,519.9 L826,520.1 L827,520.4 L828,520.6 L829,520.9 L830,521.2 L831,521.4 L832,521.7 L833,521.9 L834,522.2 L835,522.4 L836,522.7 L837,523.0 L838,523.2 L839,523.5 L840,523.7 L841,524.0 L842,524.2 L843,524.5 L844,524.7 L845,525.0 L846,525.3 L847,525.6 L848,525.9 L849,526.1 L850,526.4 L851,526.7 L852,527.0 L853,527.3 L854,527.5 L855,527.8 L856,528.1 L857,528.4" fill="none" stroke="#c8103a" stroke-width="2.6" stroke-linejoin="round"/>
  <line x1="296.5" y1="406" x2="296.5" y2="605" stroke="#c0103a" stroke-width="1"/>
  <line x1="863.5" y1="406" x2="863.5" y2="605" stroke="#2020f0" stroke-width="1"/>
  <line x1="296" y1="406.5" x2="864" y2="406.5" stroke="#000" stroke-width="1"/>
  <line x1="296" y1="604.5" x2="864" y2="604.5" stroke="#000" stroke-width="1"/>
<line x1="291" y1="411.5" x2="296" y2="411.5" stroke="#c0103a"/><line x1="864" y1="411.5" x2="869" y2="411.5" stroke="#2020f0"/><line x1="291" y1="458.5" x2="296" y2="458.5" stroke="#c0103a"/><line x1="864" y1="458.5" x2="869" y2="458.5" stroke="#2020f0"/><line x1="291" y1="505.5" x2="296" y2="505.5" stroke="#c0103a"/><line x1="864" y1="505.5" x2="869" y2="505.5" stroke="#2020f0"/><line x1="291" y1="552.5" x2="296" y2="552.5" stroke="#c0103a"/><line x1="864" y1="552.5" x2="869" y2="552.5" stroke="#2020f0"/><line x1="291" y1="600.5" x2="296" y2="600.5" stroke="#c0103a"/><line x1="864" y1="600.5" x2="869" y2="600.5" stroke="#2020f0"/></svg>
<div class="t mono" style="right:667px;top:405.9px;color:#c0103a;text-align:right">20.7480</div>
<div class="t mono" style="left:879px;top:405.9px;color:#2020f0">0.2838</div>
<div class="t mono" style="right:667px;top:452.9px;color:#c0103a;text-align:right">15.5610</div>
<div class="t mono" style="left:879px;top:452.9px;color:#2020f0">2.6378</div>
<div class="t mono" style="right:667px;top:499.9px;color:#c0103a;text-align:right">10.3740</div>
<div class="t mono" style="left:879px;top:499.9px;color:#2020f0">4.9919</div>
<div class="t mono" style="right:667px;top:546.9px;color:#c0103a;text-align:right">5.1870</div>
<div class="t mono" style="left:879px;top:546.9px;color:#2020f0">7.3459</div>
<div class="t mono" style="right:667px;top:594.9px;color:#c0103a;text-align:right">0.0000</div>
<div class="t mono" style="left:879px;top:594.9px;color:#2020f0">9.7000</div>
<div class="tick" style="left:300.5px;top:605px"></div>
<div class="rot" style="left:297.5px;top:613px">04/09 10:15:25</div>
<div class="tick" style="left:356.1px;top:605px"></div>
<div class="rot" style="left:353.1px;top:613px">04/09 10:16:53</div>
<div class="tick" style="left:411.7px;top:605px"></div>
<div class="rot" style="left:408.7px;top:613px">04/09 10:18:21</div>
<div class="tick" style="left:467.3px;top:605px"></div>
<div class="rot" style="left:464.3px;top:613px">04/09 10:19:49</div>
<div class="tick" style="left:522.9px;top:605px"></div>
<div class="rot" style="left:519.9px;top:613px">04/09 10:21:17</div>
<div class="tick" style="left:578.5px;top:605px"></div>
<div class="rot" style="left:575.5px;top:613px">04/09 10:22:45</div>
<div class="tick" style="left:634.1px;top:605px"></div>
<div class="rot" style="left:631.1px;top:613px">04/09 10:24:13</div>
<div class="tick" style="left:689.7px;top:605px"></div>
<div class="rot" style="left:686.7px;top:613px">04/09 10:25:41</div>
<div class="tick" style="left:745.3px;top:605px"></div>
<div class="rot" style="left:742.3px;top:613px">04/09 10:27:09</div>
<div class="tick" style="left:800.9px;top:605px"></div>
<div class="rot" style="left:797.9px;top:613px">04/09 10:28:37</div>
<div class="tick" style="left:856.5px;top:605px"></div>
<div class="rot" style="left:853.5px;top:613px">04/09 10:30:05</div>
<div class="t" style="left:220px;top:551px;font-size:10px;line-height:11px;transform-origin:0 0;transform:rotate(-90deg)">TEMPERATURE (°C)</div>
<div class="t" style="left:931.5px;top:528.5px;font-size:10.4px;line-height:11px;transform-origin:0 0;transform:rotate(-90deg)">LEVEL (m)</div>
<div class="a" style="left:948px;top:401px;width:1px;height:292px;background:#a8a8a8"></div>
<div class="a" style="left:212px;top:692px;width:737px;height:1px;background:#a8a8a8"></div>
<div class="a" style="left:947px;top:151px;width:2px;height:250px;background:#e8e8e8"></div>
<div class="a" style="left:6px;top:694px;width:944px;height:4px;background:#fff"></div>
<div class="a" style="left:949px;top:124px;width:3px;height:574px;background:#fff"></div>
<div class="a" style="left:952px;top:124px;width:1px;height:574px;background:#e0e0e0"></div>
<div class="a" style="left:4px;top:697px;width:949px;height:1px;background:#e0e0e0"></div>
</body></html>
